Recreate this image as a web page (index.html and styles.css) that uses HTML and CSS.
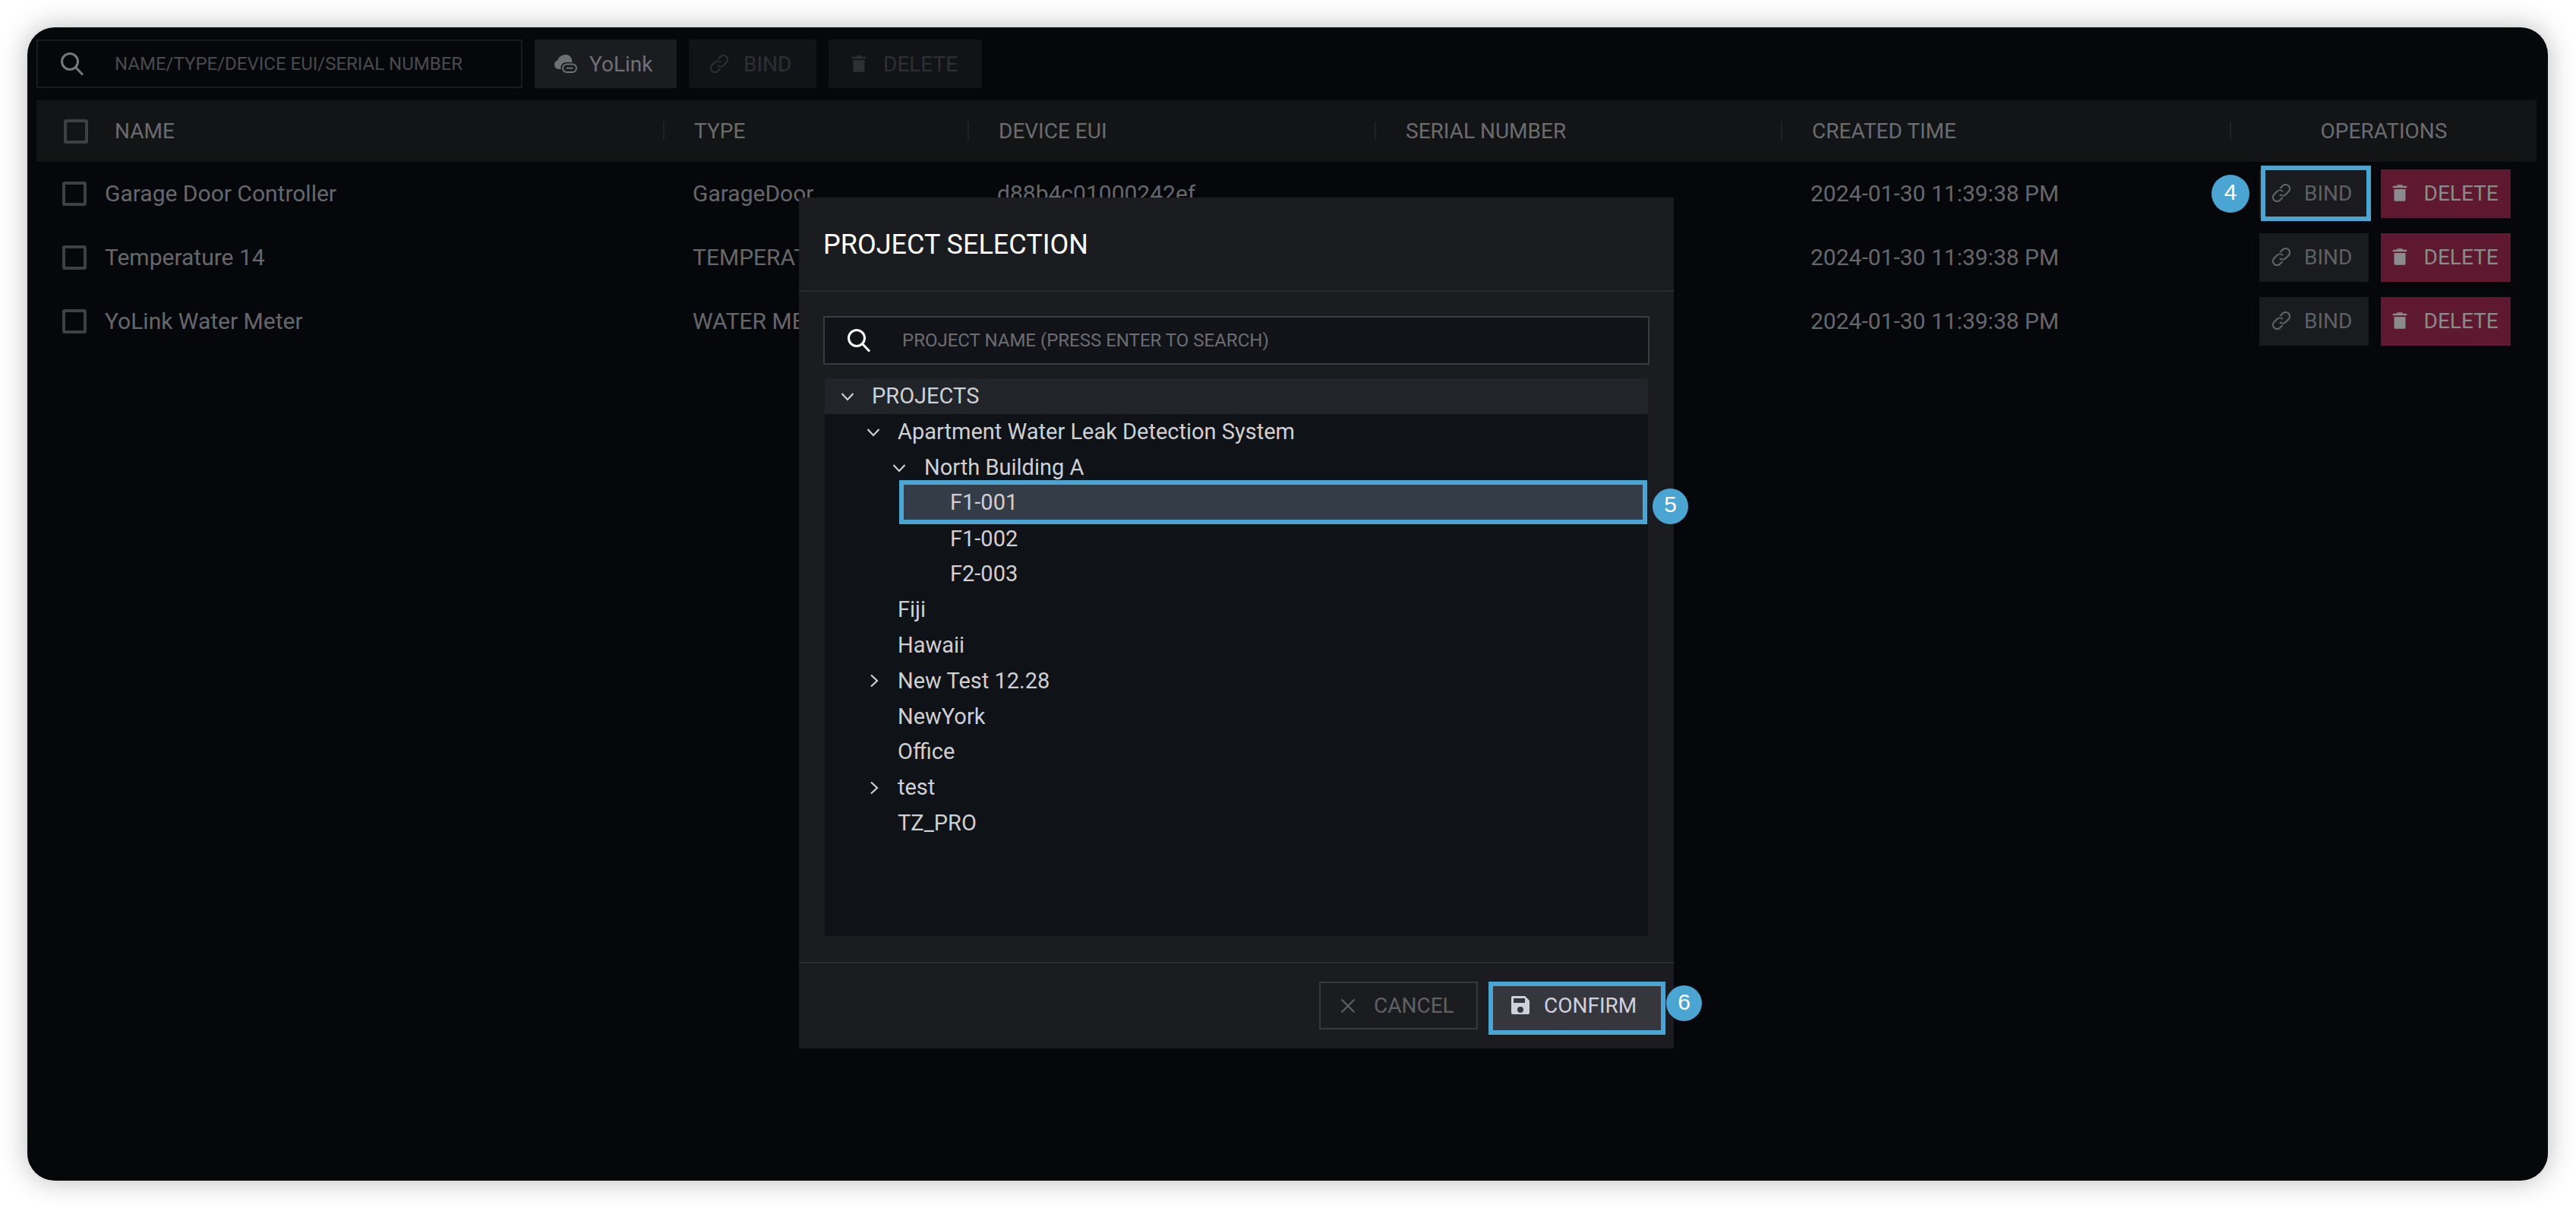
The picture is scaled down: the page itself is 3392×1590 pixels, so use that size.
FILE: index.html

```html
<!DOCTYPE html>
<html>
  <head>
    <meta charset="utf-8">
    <title>Devices</title>
    <link rel="stylesheet" href="styles.css">
  </head>
  <body>
    <svg class="defs">
      <symbol id="i-search" viewBox="0 0 32 32"><circle cx="13" cy="13" r="10.500" fill="none" stroke="currentColor" stroke-width="3"/><path d="M20.500 20.500l9.500 10" fill="none" stroke="currentColor" stroke-width="3"/></symbol>
      <symbol id="i-link" viewBox="3 3 22 22"><g fill="none" stroke="currentColor" stroke-width="2"><path d="M12.500 8.500l3.600-3.600a5 5 0 0 1 7 7l-3.900 3.900a5 5 0 0 1-7 0"/><path d="M15.500 19.500l-3.600 3.600a5 5 0 0 1-7-7l3.900-3.900a5 5 0 0 1 7 0"/></g></symbol>
      <symbol id="i-trash" viewBox="0 0 24 28"><path d="M8 1h8l1 2h6v3H1V3h6zM3 8h18v17a2 2 0 0 1-2 2H5a2 2 0 0 1-2-2z" fill="currentColor"/></symbol>
      <symbol id="i-down" viewBox="0 0 18 12"><path d="M1.500 2l7.500 8 7.500-8" fill="none" stroke="currentColor" stroke-width="2.200"/></symbol>
      <symbol id="i-right" viewBox="0 0 12 18"><path d="M2 1.500l8 7.500-8 7.500" fill="none" stroke="currentColor" stroke-width="2.200"/></symbol>
      <symbol id="i-cloud" viewBox="0 0 30 24"><path d="M15 0c4 0 7 2.500 8 6.500 .4 1.500 .4 2.500 .2 3.500H15a6.500 6.500 0 0 0-6 9H6a6 6 0 0 1-1.500-11.800C5.500 3 9.500 0 15 0z" fill="currentColor"/><rect x="11" y="12.500" width="18" height="10.500" rx="5.200" fill="none" stroke="currentColor" stroke-width="2"/><path d="M15.500 17.700h9" stroke="currentColor" stroke-width="2"/></symbol>
      <symbol id="i-x" viewBox="0 0 20 20"><path d="M1.500 1.500l17 17M18.500 1.500l-17 17" fill="none" stroke="currentColor" stroke-width="2.200"/></symbol>
      <symbol id="i-save" viewBox="0 0 24 24"><path fill-rule="evenodd" d="M2 0h16l6 6v16a2 2 0 0 1-2 2H2a2 2 0 0 1-2-2V2a2 2 0 0 1 2-2zM3 3v6h15V3zM12 14a4 4 0 1 0 0 8 4 4 0 0 0 0-8z" fill="currentColor"/></symbol>
    </svg>

    <div class="card">
      <div class="toolbar">
        <div class="search">
          <svg class="ic-search"><use href="#i-search"/></svg>
          <span>NAME/TYPE/DEVICE EUI/SERIAL NUMBER</span>
        </div>
        <div class="btn btn-yolink"><svg class="ic-cloud"><use href="#i-cloud"/></svg>YoLink</div>
        <div class="btn btn-off btn-bind-off"><svg class="ic-link"><use href="#i-link"/></svg>BIND</div>
        <div class="btn btn-off btn-del-off"><svg class="ic-trash"><use href="#i-trash"/></svg>DELETE</div>
      </div>

      <div class="thead tcols">
        <div class="th th-name"><span class="check"></span>NAME</div>
        <div class="th">TYPE</div>
        <div class="th">DEVICE EUI</div>
        <div class="th">SERIAL NUMBER</div>
        <div class="th">CREATED TIME</div>
        <div class="th th-ops">OPERATIONS</div>
      </div>

      <div class="row tcols">
        <div class="td td-name"><span class="check"></span><span class="txt">Garage Door Controller</span></div>
        <div class="td"><span class="txt">GarageDoor</span></div>
        <div class="td"><span class="txt">d88b4c01000242ef</span></div>
        <div class="td"></div>
        <div class="td"><span class="txt">2024-01-30 11:39:38 PM</span></div>
        <div class="td td-ops">
          <div class="btn btn-bind">
            <span class="badge badge-4">4</span>
            <span class="mark"></span>
            <svg class="ic-link"><use href="#i-link"/></svg>BIND
          </div>
          <div class="btn btn-del"><svg class="ic-trash"><use href="#i-trash"/></svg>DELETE</div>
        </div>
      </div>
      <div class="row tcols">
        <div class="td td-name"><span class="check"></span><span class="txt">Temperature 14</span></div>
        <div class="td"><span class="txt txt-clip">TEMPERATURE</span></div>
        <div class="td"></div>
        <div class="td"></div>
        <div class="td"><span class="txt">2024-01-30 11:39:38 PM</span></div>
        <div class="td td-ops">
          <div class="btn btn-bind"><svg class="ic-link"><use href="#i-link"/></svg>BIND</div>
          <div class="btn btn-del"><svg class="ic-trash"><use href="#i-trash"/></svg>DELETE</div>
        </div>
      </div>
      <div class="row tcols">
        <div class="td td-name"><span class="check"></span><span class="txt">YoLink Water Meter</span></div>
        <div class="td"><span class="txt txt-clip">WATER METER</span></div>
        <div class="td"></div>
        <div class="td"></div>
        <div class="td"><span class="txt">2024-01-30 11:39:38 PM</span></div>
        <div class="td td-ops">
          <div class="btn btn-bind"><svg class="ic-link"><use href="#i-link"/></svg>BIND</div>
          <div class="btn btn-del"><svg class="ic-trash"><use href="#i-trash"/></svg>DELETE</div>
        </div>
      </div>

      <div class="modal">
        <div class="modal-head">PROJECT SELECTION</div>
        <div class="modal-body">
          <div class="search search-modal">
            <svg class="ic-search"><use href="#i-search"/></svg>
            <span>PROJECT NAME (PRESS ENTER TO SEARCH)</span>
          </div>
          <div class="tree">
            <div class="node node-root"><svg class="ic-down"><use href="#i-down"/></svg>PROJECTS</div>
            <div class="node lv1"><svg class="ic-down"><use href="#i-down"/></svg>Apartment Water Leak Detection System</div>
            <div class="node lv2"><svg class="ic-down"><use href="#i-down"/></svg>North Building A</div>
            <div class="node lv3 node-sel">F1-001<span class="badge badge-5">5</span></div>
            <div class="node lv3">F1-002</div>
            <div class="node lv3">F2-003</div>
            <div class="node lv1">Fiji</div>
            <div class="node lv1">Hawaii</div>
            <div class="node lv1"><svg class="ic-right"><use href="#i-right"/></svg>New Test 12.28</div>
            <div class="node lv1">NewYork</div>
            <div class="node lv1">Office</div>
            <div class="node lv1"><svg class="ic-right"><use href="#i-right"/></svg>test</div>
            <div class="node lv1">TZ_PRO</div>
          </div>
        </div>
        <div class="modal-foot">
          <div class="btn btn-cancel"><svg class="ic-x"><use href="#i-x"/></svg>CANCEL</div>
          <div class="btn btn-confirm">
            <svg class="ic-save"><use href="#i-save"/></svg>CONFIRM
            <span class="badge badge-6">6</span>
          </div>
        </div>
      </div>
    </div>
  </body>
</html>
```

FILE: styles.css

```css
* {
  box-sizing: border-box;
}

body {
  margin: 0;
  padding: 36px 37px 36px 36px;
  background: #fff;
  font-family: Roboto, "Liberation Sans", sans-serif;
}

.defs {
  display: none;
}

.card {
  position: relative;
  height: 1518px;
  padding: 16px 15px 0 12px;
  background: #06070b;
  border-radius: 36px;
  box-shadow: 0 0 36px rgba(0, 0, 0, .28);
}

/* toolbar */
.toolbar {
  display: flex;
  gap: 16px;
  height: 64px;
  margin-bottom: 16px;
}

.search {
  display: flex;
  align-items: center;
  width: 640px;
  padding-left: 29px;
  border: 2px solid #1a1b1f;
  color: #4a4b4f;
  font-size: 24px;
}

.ic-search {
  flex: none;
  width: 32px;
  height: 32px;
  margin-right: 40px;
  color: #77787c;
}

.btn {
  position: relative;
  display: flex;
  align-items: center;
  height: 64px;
  font-size: 28px;
  white-space: nowrap;
}

.btn-yolink {
  width: 187px;
  padding-left: 26px;
  background: #1b1c20;
  color: #6f7075;
}

.ic-cloud {
  width: 30px;
  height: 24px;
  margin-right: 16px;
}

.btn-off {
  background: #121317;
  color: #2e2f33;
}

.btn-bind-off {
  width: 168px;
  padding-left: 28px;
}

.btn-bind-off .ic-link {
  margin-right: 20px;
}

.btn-del-off {
  width: 202px;
  padding-left: 30px;
}

/* table */
.tcols {
  display: grid;
  grid-template-columns: 827px 401px 536px 535px 591px 402px;
}

.thead {
  height: 81px;
  background: #131416;
}

.th {
  position: relative;
  display: flex;
  align-items: center;
  padding-left: 39px;
  color: #6b6c70;
  font-size: 28px;
}

.th::before {
  content: "";
  position: absolute;
  left: -2px;
  top: 28px;
  width: 2px;
  height: 24px;
  background: #212226;
}

.th-name::before {
  display: none;
}

.th-ops {
  justify-content: center;
  padding-left: 0;
}

.th-name {
  padding-left: 36px;
}

.check {
  width: 32px;
  height: 32px;
  flex: none;
  border: 4px solid #3f4043;
  border-radius: 3px;
  margin-right: 35px;
}

.row {
  height: 84px;
}

.td {
  display: flex;
  align-items: center;
  padding-left: 37px;
  color: #66676b;
  font-size: 30px;
  white-space: nowrap;
}

.txt {
  margin-bottom: 2px;
}

/* these run on under the dialog */
.txt-clip {
  width: 145px;
  overflow: hidden;
}

.td-name {
  padding-left: 34px;
}

.td-name .check {
  margin-right: 24px;
}

.td-ops {
  justify-content: flex-end;
  gap: 16px;
  padding-right: 34px;
}

.btn-bind {
  width: 144px;
  padding: 0 0 2px 17px;
  background: #1a1b1f;
  color: #5f6065;
}

.ic-link {
  flex: none;
  width: 24px;
  height: 24px;
  margin-right: 18px;
}

.btn-bind .ic-link {
  color: #626367;
}

.btn-del {
  width: 172px;
  padding: 0 0 2px 15px;
  background: #5e1830;
  color: #8a8b8d;
}

.ic-trash {
  width: 20px;
  height: 26px;
  margin-right: 22px;
}

.mark {
  position: absolute;
  left: 2px;
  top: -5px;
  width: 145px;
  height: 73px;
  border: 6px solid #4aa5d3;
}

/* numbered dots on top of the screenshot */
.badge {
  position: absolute;
  width: 50px;
  height: 50px;
  border-radius: 50%;
  background: #4aa5d3;
  color: #fff;
  font-family: "Liberation Sans", sans-serif;
  font-size: 30px;
  line-height: 46px;
  text-align: center;
}

.badge-4 {
  left: -63px;
  top: 7px;
}

.badge-5 {
  right: -60px;
  top: 5px;
  width: 47px;
  height: 47px;
  line-height: 42px;
}

.badge-6 {
  right: -54px;
  top: -1px;
  width: 47px;
  height: 47px;
  line-height: 44px;
}

/* dialog */
.modal {
  position: absolute;
  left: 1016px;
  top: 224px;
  display: flex;
  flex-direction: column;
  width: 1152px;
  height: 1120px;
  background: #1b1c20;
}

.modal-head {
  display: flex;
  align-items: center;
  height: 124px;
  flex: none;
  padding: 2px 32px 0;
  border-bottom: 2px solid #2b2c30;
  color: #fff;
  font-size: 36px;
}

.modal-body {
  flex: 1;
  display: flex;
  flex-direction: column;
  padding: 32px 32px 34px;
}

.search-modal {
  width: 100%;
  height: 64px;
  flex: none;
  margin-bottom: 18px;
  border-color: #3a3b3e;
  background: #111318;
  color: #6c6d72;
}

.search-modal .ic-search {
  margin-right: 41px;
  color: #fff;
}

.tree {
  flex: 1;
  margin: 0 2px;
  background: #0f1216;
}

.node {
  position: relative;
  display: flex;
  align-items: center;
  height: 46.8px;
  padding-left: 96px;
  color: #cfd0d3;
  font-size: 29px;
}

.node svg {
  position: absolute;
  color: #cfd0d3;
}

.node-root {
  padding-left: 62px;
  background: #212429;
}

.lv2 {
  padding-left: 131px;
}

.lv3 {
  padding-left: 165px;
}

.ic-down {
  width: 18px;
  height: 12px;
  left: 21px;
  top: 18px;
}

.lv1 .ic-down {
  left: 55px;
}

.lv2 .ic-down {
  left: 89px;
}

.ic-right {
  width: 12px;
  height: 18px;
  left: 59px;
  top: 15px;
}

.node-sel {
  height: 58px;
  margin: -6px 1px -5.2px 98px;
  padding-left: 61px;
  border: 6px solid #4aa5d3;
  background: #343c47;
}

.modal-foot {
  display: flex;
  flex: none;
  justify-content: flex-end;
  align-items: flex-start;
  gap: 14px;
  height: 114px;
  padding: 24px 11px 0 0;
  border-top: 2px solid #2b2c30;
}

.btn-cancel {
  width: 209px;
  height: 63px;
  padding-left: 26px;
  border: 2px solid #37383b;
  color: #5f6064;
}

.ic-x {
  width: 20px;
  height: 20px;
  margin-right: 24px;
}

.btn-confirm {
  width: 233px;
  height: 70px;
  padding: 0 0 8px 24px;
  border: 6px solid #4aa5d3;
  background: #36373d;
  color: #d0d0dc;
}

.ic-save {
  width: 24px;
  height: 24px;
  margin-right: 19px;
  flex: none;
}
```
